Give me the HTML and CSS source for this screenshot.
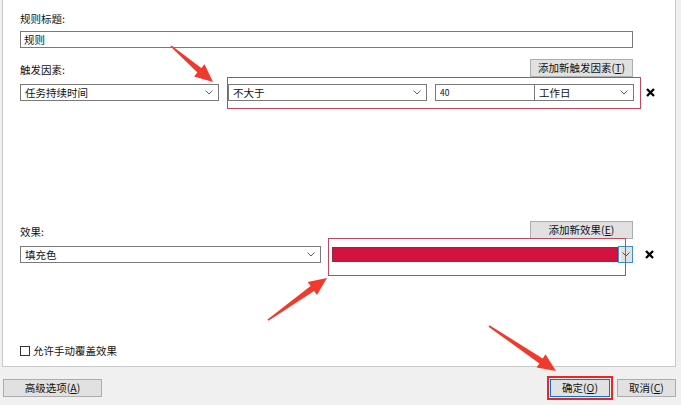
FILE: index.html
```html
<!DOCTYPE html>
<html lang="zh-CN">
<head>
<meta charset="utf-8">
<title>规则</title>
<link rel="stylesheet" href="styles.css">
</head>
<body>
<div class="panel">
  <div class="label">规则标题:</div>
  <div class="textbox">规则</div>

  <div class="section-head">
    <span class="label">触发因素:</span>
    <button class="btn btn-add">添加新触发因素(<u>T</u>)</button>
  </div>
  <div class="row">
    <div class="combo field-a"><span>任务持续时间</span><svg class="chev" viewBox="0 0 8 5"><polyline points="0.5,0.5 4,4 7.5,0.5"/></svg></div>
    <div class="combo field-b"><span>不大于</span><svg class="chev" viewBox="0 0 8 5"><polyline points="0.5,0.5 4,4 7.5,0.5"/></svg></div>
    <div class="textbox-num">40</div>
    <div class="combo field-unit"><span>工作日</span><svg class="chev" viewBox="0 0 8 5"><polyline points="0.5,0.5 4,4 7.5,0.5"/></svg></div>
    <svg class="remove" viewBox="0 0 9 9"><path d="M1 1L8 8M8 1L1 8"/></svg>
  </div>

  <div class="section-head effects-head">
    <span class="label">效果:</span>
    <button class="btn btn-add">添加新效果(<u>E</u>)</button>
  </div>
  <div class="row">
    <div class="combo field-effect"><span>填充色</span><svg class="chev" viewBox="0 0 8 5"><polyline points="0.5,0.5 4,4 7.5,0.5"/></svg></div>
    <div class="color-pick">
      <div class="swatch"></div>
      <div class="swatch-drop"><svg class="chev chev-dark" viewBox="0 0 8 5"><polyline points="0.5,0.5 4,4 7.5,0.5"/></svg></div>
    </div>
    <svg class="remove" viewBox="0 0 9 9"><path d="M1 1L8 8M8 1L1 8"/></svg>
  </div>

  <label class="check-row"><span class="checkbox"></span>允许手动覆盖效果</label>
</div>

<div class="footer">
  <button class="btn btn-advanced">高级选项(<u>A</u>)</button>
  <button class="btn btn-ok">确定(<u>O</u>)</button>
  <button class="btn btn-cancel">取消(<u>C</u>)</button>
</div>

<!-- highlight frames and callout arrows drawn over the dialog -->
<div class="mark mark-trigger"></div>
<div class="mark mark-effect"></div>
<svg class="arrows" viewBox="0 0 681 405">
  <polygon points="170.5,46.6 197.4,72.6 194.1,76.4 213,82 204.6,64.2 201.3,68 171.5,45.4"/>
  <polygon points="268.5,320.7 314.1,290.9 317,295 327,278 307.7,281.9 310.6,286 267.5,319.4"/>
  <polygon points="488.5,326.7 539.4,363.5 536.6,367.6 556,371 545.5,354.3 542.7,358.5 489.5,325.3"/>
</svg>
</body>
</html>
```

FILE: styles.css
```css
* {
  box-sizing: border-box;
}

html,
body {
  margin: 0;
}

body {
  position: relative;
  width: 681px;
  height: 405px;
  overflow: hidden;
  background: #f0f0f0;
  font-family: "Noto Sans CJK SC", "Microsoft YaHei", sans-serif;
  font-size: 10.5px;
  color: #111;
}

/* white property page */
.panel {
  display: flex;
  flex-direction: column;
  margin-left: 2px;
  width: 674px;
  height: 367px;
  padding: 12px 0 0 17px;
  background: #fff;
  border: 1px solid #c9c9c9;
  border-top: none;
}

.label {
  height: 14px;
  line-height: 14px;
}

.textbox {
  margin-top: 5px;
  width: 613px;
  height: 17px;
  padding-left: 3px;
  line-height: 15px;
  border: 1px solid #7a7a7a;
}

.section-head {
  display: flex;
  justify-content: space-between;
  align-items: flex-end;
  margin-top: 11px;
  width: 613px;
}

.effects-head {
  margin-top: 120px;
}

.btn {
  height: 18px;
  padding: 0;
  font: inherit;
  line-height: 16px;
  color: #111;
  background: #e1e1e1;
  border: 1px solid #adadad;
}

.btn u {
  text-underline-offset: 1px;
}

.btn-add {
  width: 103px;
}

.row {
  display: flex;
  align-items: center;
  margin-top: 7px;
}

.combo {
  display: flex;
  align-items: center;
  justify-content: space-between;
  height: 17px;
  padding: 0 5px 0 4px;
  background: #fff;
  border: 1px solid #7a7a7a;
}

.chev {
  width: 8px;
  height: 5px;
  fill: none;
  stroke: #606060;
  stroke-width: 1;
}

.chev-dark {
  stroke: #5a4a52;
}

.field-a {
  width: 199px;
}

.field-b {
  width: 199px;
  margin-left: 9px;
}

.textbox-num {
  width: 100px;
  height: 17px;
  margin-left: 8px;
  padding-left: 4px;
  font-size: 8.5px;
  line-height: 15px;
  border: 1px solid #7a7a7a;
}

.field-unit {
  width: 100px;
  margin-left: -1px;
}

.field-effect {
  width: 301px;
}

.remove {
  width: 9px;
  height: 9px;
  margin-left: 12px;
  fill: none;
  stroke: #000;
  stroke-width: 2.3;
}

/* colour picker combo */
.color-pick {
  display: flex;
  width: 301px;
  height: 17px;
  margin-left: 11px;
}

.swatch {
  flex: 1;
  margin: 1px 0;
  background: #d3123f;
  border: 1px solid #8d2a44;
}

.swatch-drop {
  display: flex;
  align-items: center;
  justify-content: center;
  width: 15px;
  background: #e2e2e2;
  border: 1px solid #3d8ec9;
  box-shadow: inset 2px 0 0 #f4f4f4;
}

.check-row {
  display: flex;
  align-items: center;
  gap: 3px;
  margin-top: 81px;
  height: 14px;
  line-height: 14px;
}

.checkbox {
  width: 10px;
  height: 10px;
  background: #fff;
  border: 1px solid #333;
}

/* dialog buttons */
.footer {
  display: flex;
  padding: 12px 5px 0 3px;
}

.btn-advanced {
  width: 99px;
  margin-right: auto;
}

.btn-ok {
  width: 60px;
  margin-right: 7px;
  border-color: #0078d7;
  outline: 2px solid #ec2428;
  outline-offset: 1px;
}

.btn-cancel {
  width: 59px;
}

/* annotations */
.mark {
  position: absolute;
  border: 1px solid #c0485a;
}

.mark-trigger {
  left: 227px;
  top: 77px;
  width: 414px;
  height: 32px;
}

.mark-effect {
  left: 328px;
  top: 238px;
  width: 298px;
  height: 38px;
}

.arrows {
  position: absolute;
  left: 0;
  top: 0;
  width: 681px;
  height: 405px;
  pointer-events: none;
  fill: #f03a2e;
}
```
